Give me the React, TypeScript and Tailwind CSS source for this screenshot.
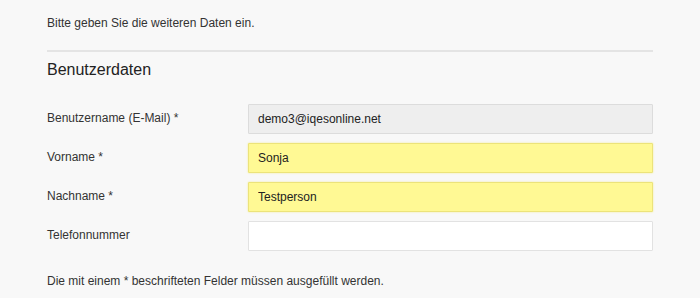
const fields = [
  { label: "Benutzername (E-Mail) *", value: "demo3@iqesonline.net", kind: "readonly" },
  { label: "Vorname *", value: "Sonja", kind: "filled" },
  { label: "Nachname *", value: "Testperson", kind: "filled" },
  { label: "Telefonnummer", value: "", kind: "empty" },
];

const inputStyles: Record<string, string> = {
  readonly: "bg-[#eeeeee] border-[#dcdcdc]",
  filled: "bg-[#fff994] border-[#ece37a] shadow-[0_0_2px_#f3ec8a]",
  empty: "bg-white border-[#e2e2e2]",
};

export default function App() {
  return (
    <div className="min-h-[298px] w-[700px] bg-[#f8f8f8] font-['Liberation_Sans',Arial,sans-serif] text-[#333]">
      <div className="pl-[47px] pr-[47px] pt-[13px]">
        <p className="text-[12px] leading-5">Bitte geben Sie die weiteren Daten ein.</p>
        <div className="mt-[17px] h-[2px] bg-[#e4e4e4]" />
        <h2 className="mt-[7px] text-[16px] leading-[22px] text-[#222]">Benutzerdaten</h2>

        <form className="mt-[23px] flex flex-col gap-[9px]">
          {fields.map((f) => (
            <div key={f.label} className="flex items-center">
              <label className="-mt-[2px] w-[201px] shrink-0 text-[12px] leading-5">{f.label}</label>
              <input
                readOnly
                value={f.value}
                className={`h-[30px] w-[405px] rounded-[1px] border px-[9px] text-[12px] text-[#222] outline-none ${inputStyles[f.kind]}`}
              />
            </div>
          ))}
        </form>

        <p className="mt-[20px] text-[12px] leading-5">
          Die mit einem * beschrifteten Felder müssen ausgefüllt werden.
        </p>
      </div>
    </div>
  );
}
